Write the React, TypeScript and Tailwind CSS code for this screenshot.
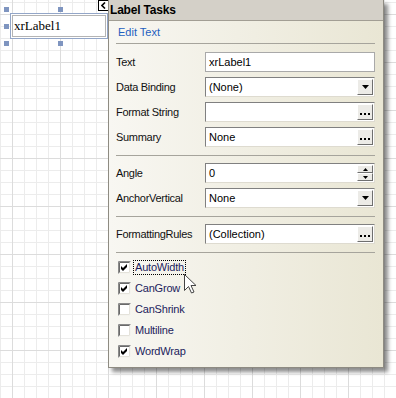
import React from "react";

const fieldBorder =
  "border border-t-[#808080] border-l-[#808080] border-r-[#dedbd0] border-b-[#dedbd0] bg-white";

function Btn({ children, h = 16 }: { children: React.ReactNode; h?: number }) {
  return (
    <div
      className={`${h === 16 ? "h-[16px]" : "h-[8px]"} w-[16px] flex items-center justify-center bg-[#ecebe7] border border-t-white border-l-white border-r-[#6f6f6f] border-b-[#6f6f6f]`}
    >
      {children}
    </div>
  );
}

function DownArrow() {
  return (
    <svg width="7" height="4" viewBox="0 0 7 4">
      <path d="M0 0H7L3.5 4Z" fill="#000" />
    </svg>
  );
}

function Dots() {
  return (
    <svg width="10" height="4" viewBox="0 0 10 4" className="mt-[3px]">
      <rect x="0" y="1" width="2" height="2" fill="#000" />
      <rect x="4" y="1" width="2" height="2" fill="#000" />
      <rect x="8" y="1" width="2" height="2" fill="#000" />
    </svg>
  );
}

function Row({
  label,
  value,
  kind,
}: {
  label: string;
  value: string;
  kind: "text" | "drop" | "dots" | "spin";
}) {
  return (
    <div className="flex h-[20px] items-center">
      <div className="w-[89px] text-[11px] tracking-[-0.3px] text-[#111]">{label}</div>
      <div className={`flex-1 h-[20px] flex items-center ${kind === "text" ? "border border-[#a9a9a9] bg-white" : fieldBorder}`}>
        <div className="flex-1 pl-[3px] text-[11px] text-black leading-none">{value}</div>
        {kind === "drop" && (
          <div className="mr-[1px]">
            <Btn>
              <DownArrow />
            </Btn>
          </div>
        )}
        {kind === "dots" && (
          <div className="mr-[1px]">
            <Btn>
              <Dots />
            </Btn>
          </div>
        )}
        {kind === "spin" && (
          <div className="mr-[1px] flex flex-col">
            <Btn h={8}>
              <svg width="5" height="3" viewBox="0 0 5 3">
                <path d="M0 3H5L2.5 0Z" fill="#000" />
              </svg>
            </Btn>
            <Btn h={8}>
              <svg width="5" height="3" viewBox="0 0 5 3">
                <path d="M0 0H5L2.5 3Z" fill="#000" />
              </svg>
            </Btn>
          </div>
        )}
      </div>
    </div>
  );
}

function CheckBox({ checked }: { checked: boolean }) {
  return (
    <svg width="13" height="13" viewBox="0 0 13 13" className="shrink-0">
      <rect x="0" y="0" width="13" height="13" fill="#fff" />
      <path d="M12.5 0.5V12.5H0.5" stroke="#f4f3ee" fill="none" />
      <path d="M11.5 1.5V11.5H1.5" stroke="#e4e2da" fill="none" />
      <path d="M0.5 12.5V0.5H12.5" stroke="#8a8a8a" fill="none" />
      <path d="M1.5 11.5V1.5H11.5" stroke="#6a6a6a" fill="none" />
      {checked && <path d="M3 5L5 7L9 3V6L5 10L3 8Z" fill="#000" />}
    </svg>
  );
}

function CheckRow({ label, checked, focus }: { label: string; checked: boolean; focus?: boolean }) {
  return (
    <div className="flex h-[21px] items-center pl-[2px]">
      <CheckBox checked={checked} />
      <div
        className={`ml-[2px] px-[1px] text-[11px] tracking-[-0.2px] text-[#1c1c5c] leading-[13px] ${
          focus ? "border border-dotted border-black" : "border border-transparent"
        }`}
      >
        {label}
      </div>
    </div>
  );
}

function Sep() {
  return <div className="h-px bg-[#a6a49c]" />;
}

export default function App() {
  return (
    <div className="relative w-[396px] h-[398px] overflow-hidden bg-white bg-[linear-gradient(to_right,#dcdcdc_1px,transparent_1px),linear-gradient(to_bottom,#dcdcdc_1px,transparent_1px),linear-gradient(to_right,#ececec_1px,transparent_1px),linear-gradient(to_bottom,#ececec_1px,transparent_1px)] bg-[size:48px_48px,48px_48px,12px_12px,12px_12px] bg-[position:12px_0px,0px_14px,0px_0px,0px_2px] font-['Liberation_Sans',Arial,sans-serif]">
      {/* label control on design surface */}
      <div className="absolute left-[10px] top-[13px] w-[98px] h-[26px] border border-[#93a6c8] p-px bg-white">
        <div className="h-full border border-[#b4b4b4] flex items-center pl-[1px] font-['Liberation_Serif','Times_New_Roman',serif] text-[13px] text-black">
          xrLabel1
        </div>
      </div>
      <div className="absolute left-[4px] top-[7px] w-[5px] h-[5px] bg-[#7f95c0]" />
      <div className="absolute left-[58px] top-[7px] w-[5px] h-[5px] bg-[#7f95c0]" />
      <div className="absolute left-[4px] top-[24px] w-[5px] h-[5px] bg-[#7f95c0]" />
      <div className="absolute left-[4px] top-[41px] w-[5px] h-[5px] bg-[#7f95c0]" />
      <div className="absolute left-[58px] top-[41px] w-[5px] h-[5px] bg-[#7f95c0]" />

      {/* smart tag button */}
      <div className="absolute left-[98px] top-0 w-[11px] h-[11px] bg-white border border-black flex items-center justify-center">
        <svg width="5" height="7" viewBox="0 0 5 7">
          <path d="M4 0.5L1 3.5L4 6.5" stroke="#000" strokeWidth="1.6" fill="none" />
        </svg>
      </div>

      {/* tasks panel */}
      <div className="absolute left-[108px] top-0 w-[276px] h-[368px] border border-t-0 border-[#8e8b82] bg-[linear-gradient(to_right,#f8f7f2,#e9e6d4)] shadow-[4px_4px_4px_rgba(0,0,0,0.45)] flex flex-col">
        <div className="h-[21px] bg-[#d4d0c8] border-b border-[#a29e94] flex items-center pl-[1px] text-[12px] font-bold tracking-[-0.2px] text-black">
          Label Tasks
        </div>
        <div className="flex flex-col pl-[7px] pr-[8px]">
          <div className="h-[22px] flex items-center pl-[2px] text-[11px] text-[#1f5fbf]">Edit Text</div>
          <Sep />
          <div className="mt-[8px] flex flex-col gap-[5px]">
            <Row label="Text" value="xrLabel1" kind="text" />
            <Row label="Data Binding" value="(None)" kind="drop" />
            <Row label="Format String" value="" kind="dots" />
            <Row label="Summary" value="None" kind="dots" />
          </div>
          <div className="mt-[8px]">
            <Sep />
          </div>
          <div className="mt-[7px] flex flex-col gap-[5px]">
            <Row label="Angle" value="0" kind="spin" />
            <Row label="AnchorVertical" value="None" kind="drop" />
          </div>
          <div className="mt-[8px]">
            <Sep />
          </div>
          <div className="mt-[7px]">
            <Row label="FormattingRules" value="(Collection)" kind="dots" />
          </div>
          <div className="mt-[8px]">
            <Sep />
          </div>
          <div className="mt-[4px] flex flex-col">
            <CheckRow label="AutoWidth" checked focus />
            <CheckRow label="CanGrow" checked />
            <CheckRow label="CanShrink" checked={false} />
            <CheckRow label="Multiline" checked={false} />
            <CheckRow label="WordWrap" checked />
          </div>
        </div>
      </div>

      {/* mouse cursor */}
      <svg className="absolute left-[184px] top-[274px]" width="13" height="20" viewBox="0 0 13 20">
        <path
          d="M0.5 0.5V16.5L4.5 12.5L7.5 19L10 18L7 11.5H12Z"
          fill="#fff"
          stroke="#444"
          strokeWidth="1"
          strokeLinejoin="miter"
        />
      </svg>
    </div>
  );
}
